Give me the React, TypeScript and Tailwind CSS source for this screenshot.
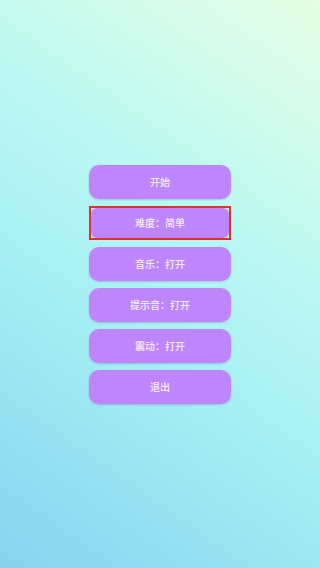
const items = ["开始", "难度：简单", "音乐：打开", "提示音：打开", "震动：打开", "退出"];

export default function App() {
  return (
    <div
      className="flex h-[568px] w-[320px] flex-col items-center justify-center gap-[7px] bg-[linear-gradient(35deg,#86d3ef_0%,#a6eff4_40%,#bdf9f2_65%,#e6fee4_100%)]"
      style={{ fontFamily: '"Noto Sans CJK SC", "Noto Sans", sans-serif' }}
    >
      {items.map((label, i) =>
        i === 1 ? (
          <div key={label} className="h-[34px] w-[142px] border-2 border-[#d9342f] p-0">
            <button className="flex h-full w-full items-center justify-center rounded-[6px] bg-[#bf86fb] text-[10px] font-medium text-[#f6efff]">
              {label}
            </button>
          </div>
        ) : (
          <button
            key={label}
            className="flex h-[34px] w-[142px] items-center justify-center rounded-[10px] bg-[#bf86fb] text-[10px] font-medium text-[#f6efff] shadow-[0_1px_2px_rgba(80,60,140,0.25)]"
          >
            {label}
          </button>
        )
      )}
    </div>
  );
}
